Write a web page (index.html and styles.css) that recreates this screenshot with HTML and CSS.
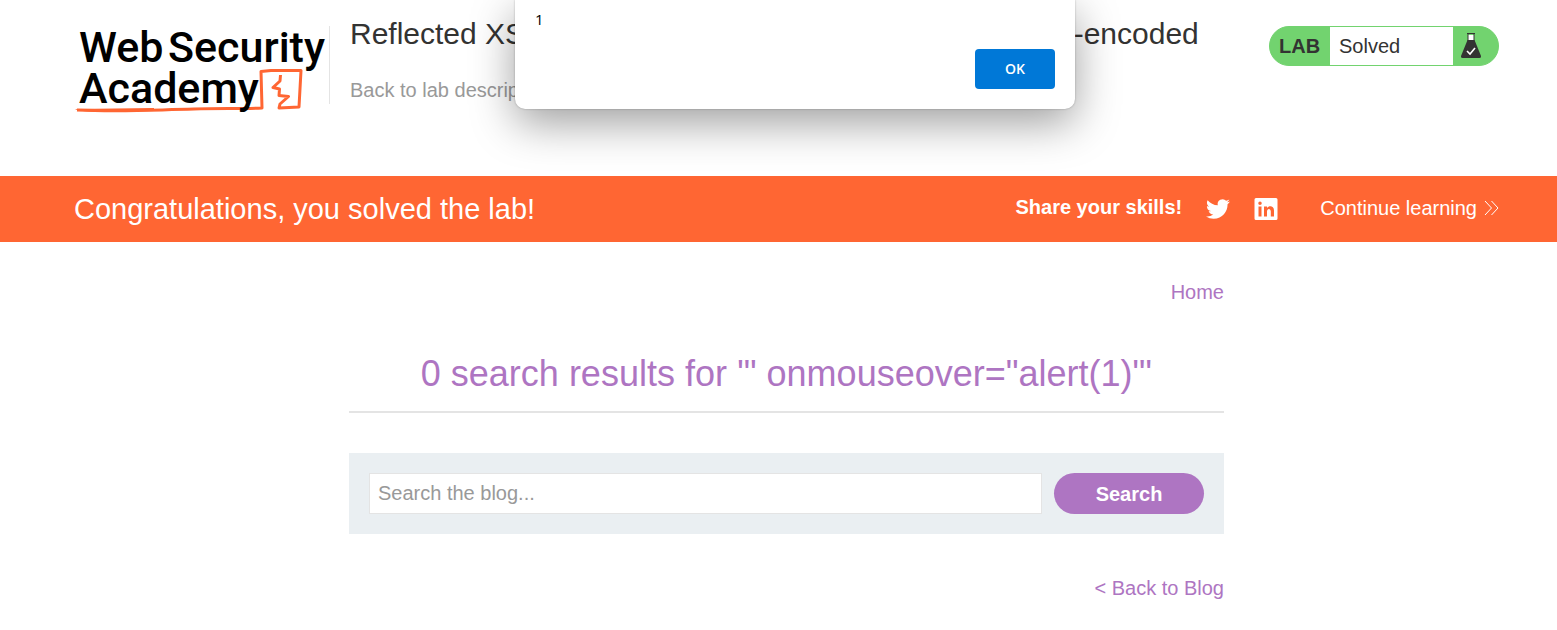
FILE: index.html
```html
<!DOCTYPE html>
<html lang="en">
<head>
<meta charset="utf-8">
<title>Reflected XSS into attribute with angle brackets HTML-encoded</title>
<link rel="stylesheet" href="styles.css">
</head>
<body>
<header class="lab-header">
  <a class="logo" href="#" aria-label="Web Security Academy">
    <svg width="252" height="92" viewBox="0 0 252 92">
      <path class="logo-line" d="M3 84 C50 86 75 84 120 83 C145 82 165 83 188 82 L187 45.500 L197 44.500 L227 44.500 L225 81 L205 82 L206 78 L214.500 70.500 L205 69.500 L205.500 63 L199 61.500 L206 55 L206.500 49"/>
      <path fill="#ff6633" d="M1 83L80 82V85L30 86Q6 86 1 83Z"/>
      <text class="logo-text" x="5" y="36">Web</text>
      <text class="logo-text" x="94" y="36">Security</text>
      <text class="logo-text" x="5" y="77">Academy</text>
    </svg>
  </a>
  <div class="lab-title">
    <h2>Reflected XSS into attribute with angle brackets HTML-encoded</h2>
    <a class="lab-back" href="#">Back to lab description</a>
  </div>
  <div class="lab-status">
    <span class="lab-label">LAB</span>
    <span class="lab-state">Solved</span>
    <svg class="lab-flask" width="20" height="26" viewBox="0 0 20 26" aria-hidden="true">
      <path fill="#fff" d="M7 2H13V8H7Z"/>
      <path fill="none" stroke="#333332" d="M6 .5H14M7 1V8M13 1V8"/>
      <path fill="#333332" d="M6.500 7H13.500L20 23Q20.500 25 18.500 25H1.500Q-.5 25 0 23Z"/>
      <path fill="none" stroke="#fff" stroke-width="1.600" d="M6 18L9 21L14 15"/>
    </svg>
  </div>
</header>
<section class="banner">
  <h4>Congratulations, you solved the lab!</h4>
  <div class="share">
    <strong>Share your skills!</strong>
    <a href="#" aria-label="Share on Twitter"><svg width="24" height="24" viewBox="0 0 24 24"><path fill="#fff" d="M23.950 4.570a10 10 0 0 1-2.820.77 4.960 4.960 0 0 0 2.160-2.720c-.95.55-2 .95-3.130 1.180a4.920 4.920 0 0 0-8.380 4.480C7.690 8.090 4.070 6.130 1.640 3.160a4.820 4.820 0 0 0-.67 2.480c0 1.710.87 3.210 2.190 4.100a4.900 4.900 0 0 1-2.230-.62v.06a4.920 4.920 0 0 0 3.950 4.830 5 5 0 0 1-2.210.08 4.940 4.940 0 0 0 4.600 3.420A9.870 9.870 0 0 1 0 19.540a14 14 0 0 0 7.550 2.210c9.050 0 14-7.500 14-13.980 0-.21 0-.42-.02-.63a9.940 9.940 0 0 0 2.420-2.570z"/></svg></a>
    <a href="#" aria-label="Share on LinkedIn"><svg width="24" height="24" viewBox="0 0 24 24"><path fill="#fff" fill-rule="evenodd" d="M2 1H22Q23.500 1 23.500 2.500V21.500Q23.500 23 22 23H2Q.5 23 .5 21.500V2.500Q.5 1 2 1ZM4.500 9.500V19.500H7.500V9.500ZM6 4.500A1.750 1.750 0 1 0 6 8A1.750 1.750 0 1 0 6 4.500ZM10 9.500V19.500H13V14.500C13 11 16.800 11 16.800 14.500V19.500H20V13.500C20 8.700 15 8.300 13 11V9.500Z"/></svg></a>
    <a class="continue" href="#">Continue learning
      <svg width="16" height="16" viewBox="0 0 16 16" aria-hidden="true"><path fill="none" stroke="#fff" d="M2 1L8.500 8L2 15M8.500 1L15 8L8.500 15"/></svg>
    </a>
  </div>
</section>
<main class="content">
  <nav class="top-nav"><a href="#">Home</a></nav>
  <h1>0 search results for '" onmouseover="alert(1)"'</h1>
  <form class="search" onsubmit="return false">
    <input type="text" placeholder="Search the blog..." aria-label="Search the blog">
    <button type="submit">Search</button>
  </form>
  <nav class="back"><a href="#">&lt; Back to Blog</a></nav>
</main>
<div class="alert" role="alertdialog" aria-labelledby="alert-text">
  <p id="alert-text">1</p>
  <button type="button">OK</button>
</div>
</body>
</html>
```
FILE: styles.css
```css
* { box-sizing: border-box; }
body {
  margin: 0;
  background: #fff;
  color: #333332;
  font: 20px/24px "Liberation Sans", Arial, sans-serif;
}
a { color: #ae75c2; text-decoration: none; }
h1, h2, h4, p { margin: 0; font-weight: 400; }
svg { display: block; overflow: visible; }

.lab-header {
  display: flex;
  align-items: flex-start;
  min-height: 176px;
  padding: 26px 58px 0 74px;
}
.logo {
  height: 78px;
  padding-right: 3px;
  border-right: 1px solid #e4e4e4;
}
.logo-text {
  fill: #000;
  font: 500 43px Roboto, sans-serif;
}
.logo-line { fill: none; stroke: #ff6633; stroke-width: 3; stroke-linejoin: round; }
.lab-title {
  flex: 1;
  margin: -10px 0 0 20px;
}
.lab-title h2 { font-size: 30px; line-height: 36px; }
.lab-back { display: inline-block; margin-top: 26px; color: #999; }
.lab-status {
  display: flex;
  align-items: center;
  width: 230px;
  height: 40px;
  border: 1px solid #72d36f;
  border-radius: 20px;
  background: #72d36f;
  overflow: hidden;
}
.lab-label { width: 60px; padding-left: 9px; font-weight: 700; }
.lab-state {
  width: 123px;
  padding-left: 9px;
  background: #fff;
  line-height: 38px;
}
.lab-flask { margin-left: 8px; }

.banner {
  display: flex;
  align-items: center;
  justify-content: space-between;
  min-height: 66px;
  padding: 0 58px 0 74px;
  background: #ff6633;
  color: #fff;
}
.banner h4 { font-size: 29px; line-height: 36px; }
.share { display: flex; align-items: center; gap: 24px; }
.share strong { padding-bottom: 4px; }
.share a { color: #fff; }
.share .continue { display: flex; align-items: center; gap: 6px; margin-left: 18px; padding-bottom: 2px; }

.content { width: 891px; margin: 0 auto; padding-left: 16px; }
.top-nav { padding-top: 38px; text-align: right; }
.content h1 {
  margin: 40px 0;
  padding: 8px 0 16px;
  border-bottom: 2px solid #e4e4e4;
  color: #ae75c2;
  font-size: 36px;
  line-height: 43px;
  text-align: center;
}
.search {
  display: flex;
  gap: 12px;
  padding: 20px;
  background: #eaeff2;
}
.search input {
  flex: 1;
  height: 41px;
  padding: 0 8px;
  border: 1px solid #e4e4e4;
  background: #fff;
  font: inherit;
}
.search input::placeholder { color: #999; }
.search button {
  width: 150px;
  border: 0;
  border-radius: 21px;
  background: #ae75c2;
  color: #fff;
  font: inherit;
  font-weight: 700;
}
.back { margin-top: 42px; text-align: right; }

.alert {
  position: absolute;
  top: 0;
  left: 515px;
  display: flex;
  flex-direction: column;
  width: 560px;
  padding: 9px 20px 20px;
  border-radius: 0 0 10px 10px;
  background: #fff;
  box-shadow: 0 0 2px rgba(0, 0, 0, .3), 0 14px 44px rgba(0, 0, 0, .38);
  color: #000;
  font: 15px/20px "Open Sans", "Noto Sans", sans-serif;
}
.alert button {
  align-self: flex-end;
  width: 80px;
  height: 40px;
  margin-top: 20px;
  border: 0;
  border-radius: 4px;
  background: #0078d7;
  color: #fff;
  font: 600 14px/20px "Open Sans", "Noto Sans", sans-serif;
}
```
